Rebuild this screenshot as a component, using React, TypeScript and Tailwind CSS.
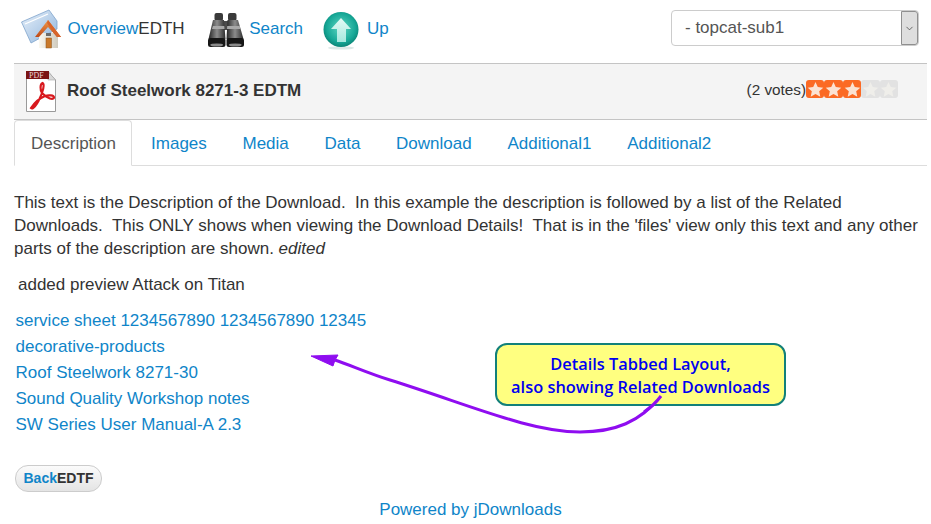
import { ChevronDown } from 'lucide-react';

const tabs = ['Images', 'Media', 'Data', 'Download', 'Additional1', 'Additional2'];
const related = [
  'service sheet 1234567890 1234567890 12345',
  'decorative-products',
  'Roof Steelwork 8271-30',
  'Sound Quality Workshop notes',
  'SW Series User Manual-A 2.3',
];

const HomeIcon = () => (
  <svg width="44" height="40" viewBox="0 0 44 40" className="shrink-0">
    <defs>
      <linearGradient id="sheet" x1="0" y1="0" x2="1" y2="1">
        <stop offset="0" stopColor="#e8f1fa" />
        <stop offset="1" stopColor="#8fb4dc" />
      </linearGradient>
      <linearGradient id="roof" x1="0" y1="0" x2="0" y2="1">
        <stop offset="0" stopColor="#f09a4a" />
        <stop offset="1" stopColor="#c04a18" />
      </linearGradient>
      <linearGradient id="wall" x1="0" y1="0" x2="1" y2="0">
        <stop offset="0" stopColor="#fbf8f0" />
        <stop offset="1" stopColor="#cfcabd" />
      </linearGradient>
    </defs>
    <path d="M0.5 13 L28 1 L36 12 L36 20 L10 34 Z" fill="url(#sheet)" stroke="#7fa3cc" strokeWidth="0.8" />
    <path d="M4 15 L27 5" stroke="#fff" strokeWidth="1.2" />
    <path d="M18 24 L37 24 L37 39 L18 39 Z" fill="url(#wall)" />
    <path d="M14 28 L27 11 L40 28 L36 28 L27 18 L18 28 Z" fill="url(#roof)" />
    <path d="M27 11 L40 28 L36 28 L26 14 Z" fill="#d8642a" />
    <rect x="25" y="24" width="5" height="3" fill="#6b6b6b" />
    <rect x="25" y="29" width="5.5" height="10" fill="#c9792a" stroke="#8a5620" strokeWidth="0.5" />
  </svg>
);

const BinocularsIcon = () => (
  <svg width="36" height="35" viewBox="0 0 36 35" className="shrink-0 mt-[2px]">
    <defs>
      <linearGradient id="bin" x1="0" y1="0" x2="1" y2="0">
        <stop offset="0" stopColor="#262626" />
        <stop offset="0.5" stopColor="#8c8c8c" />
        <stop offset="1" stopColor="#2c2c2c" />
      </linearGradient>
    </defs>
    <rect x="6.5" y="0" width="8.5" height="8" rx="2" fill="#3a3a3a" />
    <rect x="20" y="0" width="8.5" height="8" rx="2" fill="#3a3a3a" />
    <rect x="14" y="8" width="7" height="9" fill="#4c4c4c" />
    <path d="M5 7 L16 7 L17.5 26 L0.5 26 Z" fill="url(#bin)" />
    <path d="M19.5 7 L30 7 L35.5 26 L18.5 26 Z" fill="url(#bin)" />
    <path d="M5 13 L16.3 13 L16.6 16 L4 16 Z" fill="#a8a8a8" />
    <path d="M19.2 13 L31.7 13 L32.5 16 L19 16 Z" fill="#a8a8a8" />
    <rect x="0" y="25" width="17.5" height="9" rx="2.5" fill="#161616" />
    <rect x="18.5" y="25" width="17.5" height="9" rx="2.5" fill="#161616" />
    <ellipse cx="8.7" cy="32" rx="6.5" ry="1.6" fill="#8a8a8a" />
    <ellipse cx="27.2" cy="32" rx="6.5" ry="1.6" fill="#8a8a8a" />
  </svg>
);

const UpIcon = () => (
  <svg width="36" height="38" viewBox="0 0 36 38" className="shrink-0 mt-[4px]">
    <defs>
      <radialGradient id="up" cx="0.5" cy="0.45" r="0.55">
        <stop offset="0" stopColor="#5fd8c4" />
        <stop offset="0.75" stopColor="#16a796" />
        <stop offset="1" stopColor="#0b8577" />
      </radialGradient>
      <linearGradient id="upArrow" x1="0" y1="0" x2="0" y2="1">
        <stop offset="0" stopColor="#e4fbf6" />
        <stop offset="1" stopColor="#a5e8de" />
      </linearGradient>
    </defs>
    <ellipse cx="18" cy="36" rx="13" ry="1.6" fill="#dce9e7" />
    <circle cx="18" cy="17.5" r="17.5" fill="url(#up)" />
    <path d="M18 6 L28 17 L23 17 L23 30 L14 30 L14 17 L8 17 Z" fill="url(#upArrow)" />
  </svg>
);

const PdfIcon = () => (
  <svg width="30" height="41" viewBox="0 0 30 41" className="shrink-0">
    <path d="M0.5 0.5 L22 0.5 L29.5 9 L29.5 40.5 L0.5 40.5 Z" fill="#fff" stroke="#9a9a9a" />
    <path d="M22 0.5 L22 9 L29.5 9 Z" fill="#d8d8d8" stroke="#a8a8a8" strokeWidth="0.6" />
    <path d="M0 0 L23 0 L23 8 L0 8 Z" fill="#7b1414" />
    <text x="3" y="6.8" fontSize="8" fill="#e8d8d8" className="font-['Liberation_Serif',serif]">PDF</text>
    <path
      d="M5 37 C9 31 14 27 19 25 C22 24 28 24 28 26.5 C28 29 21 28 16 22 C14 19 14 13 16.5 12 C19 13 17 21 13 29 C11 33 7 39 5 37 Z"
      fill="none"
      stroke="#d8191e"
      strokeWidth="2.2"
    />
  </svg>
);

const Star = ({ on }: { on: boolean }) => (
  <div className={`w-[18.4px] h-[18px] rounded-[3px] flex items-center justify-center ${on ? 'bg-[#fb6a24]' : 'bg-[#e2e2e2]'}`}>
    <svg width="17" height="17" viewBox="0 0 24 24">
      <path d="M12 1.5 L15.2 8.6 L23 9.4 L17.2 14.6 L18.8 22.3 L12 18.4 L5.2 22.3 L6.8 14.6 L1 9.4 L8.8 8.6 Z" fill={on ? '#fbe2d2' : '#efeeea'} />
    </svg>
  </div>
);

const App = () => {
  return (
    <main className="relative w-[931px] h-[524px] overflow-hidden bg-white pl-[14px] pr-[4px] text-[17px] leading-[23px] text-[#333] font-['Liberation_Sans',Arial,sans-serif]">
      {/* top nav */}
      <div className="h-[63px] pb-[5px] flex items-center">
        <a className="flex items-center ml-[7px] text-[#0f85c9]">
          <HomeIcon />
          <span className="ml-[2.5px] mb-[2px]">Overview<span className="text-[#333]">EDTH</span></span>
        </a>
        <a className="flex items-center ml-[23px] text-[#0f85c9]">
          <BinocularsIcon />
          <span className="ml-[5.5px] mb-[2px]">Search</span>
        </a>
        <a className="flex items-center ml-[20px] text-[#0f85c9]">
          <UpIcon />
          <span className="ml-[8px] mb-[2px]">Up</span>
        </a>
        <div className="ml-auto mr-[8px] mt-[-2px] w-[248px] h-[36px] rounded-[4px] border border-[#ccc] flex items-center justify-between text-[#555] pl-[13px]">
          <span className="mb-[2px]">- topcat-sub1</span>
          <div className="w-[17px] h-[34px] bg-[#dedede] border border-[#8f8f8f] rounded-r-[3px] flex items-center justify-center">
            <ChevronDown size={11} strokeWidth={1.5} className="text-[#333]" />
          </div>
        </div>
      </div>

      {/* title bar */}
      <div className="h-[57px] bg-[#f4f4f4] border-y border-[#c4c4c4] flex items-center pl-[12px]">
        <PdfIcon />
        <h1 className="ml-[11px] mb-[2px] font-bold text-[#333]">Roof Steelwork 8271-3 EDTM</h1>
        <div className="ml-auto mr-[29px] mb-[5px] flex items-center">
          <span className="text-[15.3px]">(2 votes)</span>
          <div className="flex">
            <Star on />
            <Star on />
            <Star on />
            <Star on={false} />
            <Star on={false} />
          </div>
        </div>
      </div>

      {/* tabs */}
      <div className="h-[46px] flex border-b border-[#ddd]">
        <div className="h-[46px] pl-4 pr-[15px] border border-[#ddd] border-b-white rounded-t-[4px] bg-white text-[#555] flex items-center mr-[2px]">
          Description
        </div>
        {tabs.map((t) => (
          <div key={t} className="px-4 pt-[2px] border border-transparent text-[#0f85c9] flex items-center mr-[1.7px]">
            {t}
          </div>
        ))}
      </div>

      {/* description */}
      <p className="mt-[25px]">
        This text is the Description of the Download.&nbsp; In this example the description is followed by a list of the Related Downloads.&nbsp; This ONLY shows when viewing the Download Details!&nbsp; That is in the 'files' view only this text and any other parts of the description are shown. <em>edited</em>
      </p>
      <p className="mt-[13px] ml-[4px]">added preview Attack on Titan</p>

      <ul className="mt-[13px] ml-[1.5px] flex flex-col gap-[3px] text-[#0f85c9]">
        {related.map((r) => (
          <li key={r}>{r}</li>
        ))}
      </ul>

      <button className="mt-[29px] ml-[1px] h-[27px] w-[87px] rounded-[13px] border border-[#ccc] bg-gradient-to-b from-[#fbfbfb] to-[#e4e4e4] text-[14px] font-bold text-[#333] flex items-center justify-center">
        <span className="text-[#0f85c9]">Back</span>EDTF
      </button>

      <p className="mt-[6px] text-center text-[#0f85c9]">Powered by jDownloads</p>

      {/* annotation */}
      <svg width="931" height="524" viewBox="0 0 931 524" className="absolute left-0 top-0 pointer-events-none">
        <path d="M335 360 C350 365 370 374 390 380 C470 405 530 432 580 432 C615 432 640 422 661 396" fill="none" stroke="#8f0df0" strokeWidth="3" />
        <path d="M311 356 L338 355 L335 360 L333 366 Z" fill="#8f0df0" stroke="#8f0df0" strokeWidth="1" />
      </svg>
      <div className="absolute left-[495px] top-[343px] w-[291px] h-[63px] rounded-[12px] border-2 border-[#12807a] bg-[#ffff80] flex flex-col items-center justify-center text-[16.4px] leading-[23px] font-semibold text-[#0000f0] font-['Open_Sans',sans-serif]">
        <span>Details Tabbed Layout,</span>
        <span>also showing Related Downloads</span>
      </div>
      <svg width="931" height="524" viewBox="0 0 931 524" className="absolute left-0 top-0 pointer-events-none">
        <path d="M661 396 C655 404 650 408 644 412" fill="none" stroke="#8f0df0" strokeWidth="3" />
      </svg>
    </main>
  );
};

export default App;
